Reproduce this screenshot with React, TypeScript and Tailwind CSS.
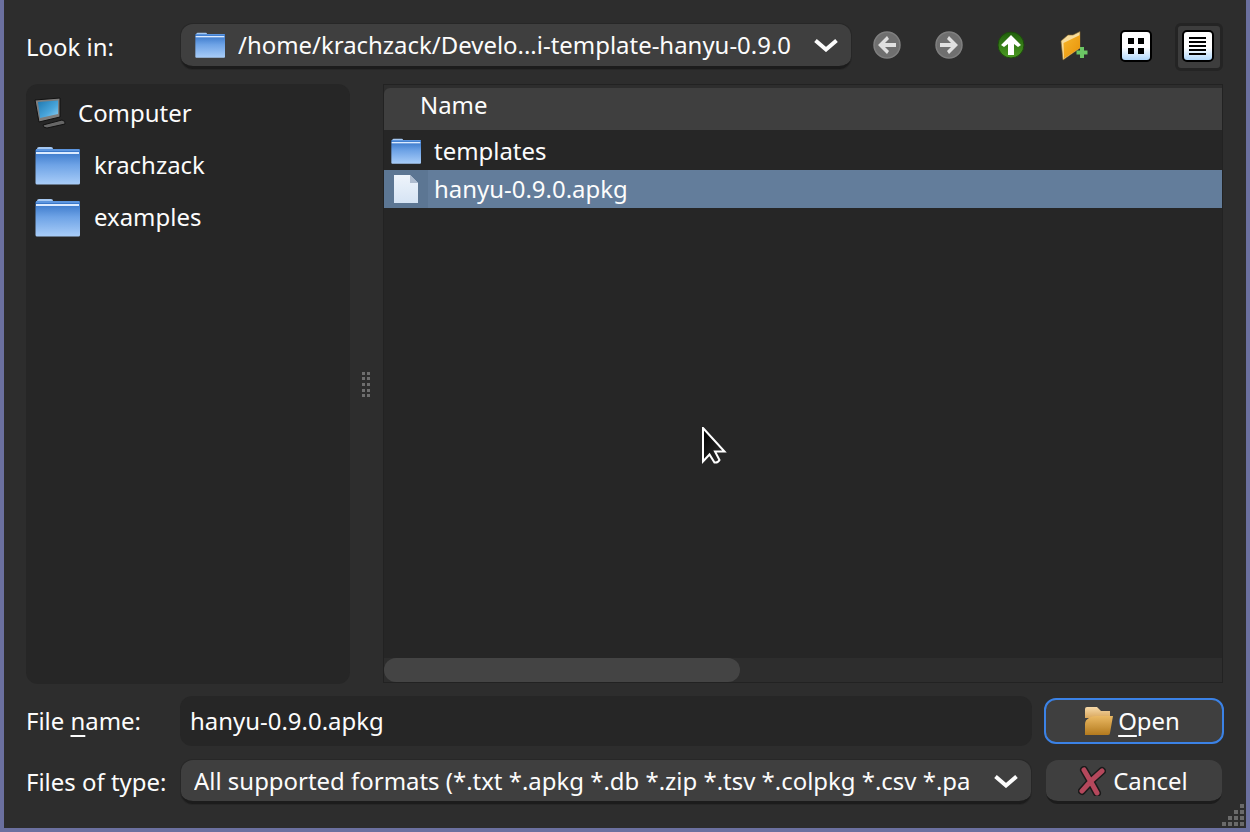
import React from 'react'

const FolderIcon = ({ id, className }: { id: string; className: string }) => (
  <svg viewBox="0 0 45 39" className={className}>
    <defs>
      <linearGradient id={id} x1="0" y1="0" x2="0" y2="1">
        <stop offset="0" stopColor="#2f6fc4" />
        <stop offset="0.45" stopColor="#6ea3e6" />
        <stop offset="1" stopColor="#a9cdf8" />
      </linearGradient>
    </defs>
    <path d="M2 3 Q2 1 4 1 H16 Q18 1 18 3 H2 Z" fill="#a5c8f2" />
    <rect x="0.5" y="3" width="44.5" height="35.5" rx="1.5" fill={`url(#${id})`} />
    <rect x="1" y="3" width="43.5" height="2" fill="#5c95de" />
    <rect x="1" y="6" width="43" height="2" fill="#dcebff" />
  </svg>
)

const FileIcon = () => (
  <svg viewBox="0 0 26 30" className="h-[30px] w-[26px]">
    <defs>
      <linearGradient id="file-grad" x1="0" y1="0" x2="0" y2="1">
        <stop offset="0" stopColor="#eef4fb" />
        <stop offset="1" stopColor="#d6e4f4" />
      </linearGradient>
    </defs>
    <path d="M1 1 H17 L25 9 V29 H1 Z" fill="url(#file-grad)" />
    <path d="M17 1 L25 9 H17 Z" fill="#aebccf" />
  </svg>
)

const ComputerIcon = () => (
  <svg viewBox="0 0 32 32" className="h-8 w-8">
    <defs>
      <linearGradient id="screen-grad" x1="0" y1="0" x2="1" y2="1">
        <stop offset="0" stopColor="#1f78b0" />
        <stop offset="0.6" stopColor="#4aa6dc" />
        <stop offset="1" stopColor="#8ccdf0" />
      </linearGradient>
    </defs>
    <path d="M1 3 L26 1 V20 L5 25 Z" fill="#7d7d7d" stroke="#111" strokeWidth="1" />
    <path d="M4 5 L24 3.5 V17 L6 21 Z" fill="url(#screen-grad)" />
    <path d="M9 28 L28 23 Q32 24 31 27 L13 31 Q9 31 9 28 Z" fill="#666" stroke="#111" strokeWidth="1" />
  </svg>
)

const Chevron = () => (
  <svg viewBox="0 0 24 14" className="h-[14px] w-6 shrink-0">
    <polyline points="1.5,2.5 12,11.5 22.5,2.5" fill="none" stroke="#fcfcfc" strokeWidth="4" />
  </svg>
)

const NavIcon = ({ dir }: { dir: 'left' | 'right' }) => (
  <svg viewBox="0 0 28 28" className="h-7 w-7">
    <circle cx="14" cy="14" r="13" fill="#6f6f6f" stroke="#7f7f7f" strokeWidth="1.5" />
    <path
      d={dir === 'left' ? 'M14 5 L5 14 L14 23 L16 20 L12 16 H23 V12 H12 L16 8 Z' : 'M14 5 L23 14 L14 23 L12 20 L16 16 H5 V12 H16 L12 8 Z'}
      fill="#e0e0e0"
    />
  </svg>
)

const UpIcon = () => (
  <svg viewBox="0 0 28 28" className="h-7 w-7">
    <defs>
      <linearGradient id="up-grad" x1="0" y1="0" x2="0" y2="1">
        <stop offset="0" stopColor="#1f5f0c" />
        <stop offset="1" stopColor="#4c9a22" />
      </linearGradient>
    </defs>
    <circle cx="14" cy="14" r="13" fill="url(#up-grad)" stroke="#1d4a0d" strokeWidth="1" />
    <path d="M14 4 L24 14 L21 16 L17 13 V24 H11 V13 L7 16 L4 14 Z" fill="#fff" />
  </svg>
)

const NewFolderIcon = () => (
  <svg viewBox="0 0 30 32" className="ml-1 h-8 w-[30px]">
    <defs>
      <linearGradient id="new-grad" x1="0" y1="0" x2="1" y2="1">
        <stop offset="0" stopColor="#f6b52a" />
        <stop offset="1" stopColor="#e8920a" />
      </linearGradient>
    </defs>
    <path d="M1 12 L8 6 L13 6 L20 2.5 V19 L3 31 Z" fill="#f7dc9c" stroke="#8a6a2a" strokeWidth="0.6" />
    <path d="M3.5 14 L20 6 V19 L4 29.5 Z" fill="url(#new-grad)" />
    <rect x="20" y="18" width="4" height="11" fill="#6cc765" />
    <rect x="16.5" y="21.5" width="11" height="4" fill="#6cc765" />
  </svg>
)

const IconViewIcon = () => (
  <svg viewBox="0 0 32 32" className="h-8 w-8">
    <defs>
      <linearGradient id="view-a" x1="0" y1="0" x2="0" y2="1">
        <stop offset="0.55" stopColor="#ffffff" />
        <stop offset="1" stopColor="#a9d4fb" />
      </linearGradient>
    </defs>
    <rect x="1" y="1" width="30" height="30" rx="4" fill="url(#view-a)" stroke="#000" strokeWidth="2" />
    <rect x="8" y="8" width="6" height="6" fill="#000" />
    <rect x="18" y="8" width="6" height="6" fill="#000" />
    <rect x="8" y="18" width="6" height="6" fill="#000" />
    <rect x="18" y="18" width="6" height="6" fill="#000" />
  </svg>
)

const ListViewIcon = () => (
  <svg viewBox="0 0 32 32" className="h-8 w-8 shrink-0">
    <defs>
      <linearGradient id="view-b" x1="0" y1="0" x2="0" y2="1">
        <stop offset="0.55" stopColor="#ffffff" />
        <stop offset="1" stopColor="#a9d4fb" />
      </linearGradient>
    </defs>
    <rect x="1" y="1" width="30" height="30" rx="4" fill="url(#view-b)" stroke="#000" strokeWidth="2" />
    <rect x="7" y="7" width="17" height="2" fill="#000" />
    <rect x="7" y="11" width="17" height="2" fill="#000" />
    <rect x="7" y="15" width="17" height="2" fill="#000" />
    <rect x="7" y="19" width="17" height="2" fill="#000" />
    <rect x="7" y="23" width="17" height="2" fill="#000" />
  </svg>
)

const OpenIcon = () => (
  <svg viewBox="0 0 30 30" className="h-[30px] w-[30px]">
    <defs>
      <linearGradient id="open-back" x1="0" y1="0" x2="0" y2="1">
        <stop offset="0" stopColor="#f6d9a8" />
        <stop offset="1" stopColor="#d9a75c" />
      </linearGradient>
      <linearGradient id="open-front" x1="0" y1="0" x2="0" y2="1">
        <stop offset="0" stopColor="#eab964" />
        <stop offset="1" stopColor="#b37a1e" />
      </linearGradient>
    </defs>
    <path d="M1 3 Q1 1 3 1 H13 L17 5 H26 V12 H1 Z" fill="url(#open-back)" />
    <path d="M1 29 V18 Q1 14 5 12 Q8 10 12 10 H29 L26 27 Q26 29 24 29 Z" fill="url(#open-front)" />
  </svg>
)

const CancelIcon = () => (
  <svg viewBox="0 0 28 30" className="h-[30px] w-7">
    <g fill="none" strokeLinecap="round">
      <path d="M6 4 Q12 14 19 27 M24 5 Q13 14 4 25" stroke="#1a1a1a" strokeWidth="8" />
      <path d="M6 4 Q12 14 19 27 M24 5 Q13 14 4 25" stroke="#b5485c" strokeWidth="5" />
    </g>
  </svg>
)

const SplitterGrip = () => (
  <svg viewBox="0 0 8 25" className="h-[25px] w-2">
    {[0, 5, 11, 17, 22].map(y => (
      <g key={y} fill="#6e6e6e">
        <rect x="0" y={y} width="3" height="3" />
        <rect x="5" y={y} width="3" height="3" />
      </g>
    ))}
  </svg>
)

const App = () => {
  return (
    <div
      className="relative flex h-[832px] w-[1250px] flex-col overflow-hidden border-x-4 border-b-4 border-[#6b709f] bg-[#2d2d2d] pt-6 pr-6 pl-[22px] text-[23.95px] leading-8 text-[#fcfcfc]"
      style={{ fontFamily: '"Noto Sans", sans-serif' }}
    >
      {/* Look in */}
      <div className="flex h-[45px] items-center">
        <div className="w-[155px] shrink-0">Look in:</div>
        <div className="flex h-[45px] w-[670px] shrink-0 items-center rounded-xl border-b-[3px] border-[#1c1c1c] bg-[#3f3f3f] pr-[13px] pl-[14px] ring-1 ring-[#272727]">
          <FolderIcon id="combo-folder" className="h-[26px] w-[30px] shrink-0" />
          <span className="ml-[13px] flex-1 overflow-hidden whitespace-nowrap">/home/krachzack/Develo...i-template-hanyu-0.9.0</span>
          <Chevron />
        </div>
        <div className="ml-3 flex shrink-0 items-center">
          <div className="flex h-12 w-12 items-center justify-center pb-[3px]"><NavIcon dir="left" /></div>
          <div className="ml-[14px] flex h-12 w-12 items-center justify-center pb-[3px]"><NavIcon dir="right" /></div>
          <div className="ml-[14px] flex h-12 w-12 items-center justify-center pb-[3px]"><UpIcon /></div>
          <div className="ml-[14px] flex h-12 w-12 items-center justify-center pb-[3px]"><NewFolderIcon /></div>
          <div className="ml-[15px] flex h-12 w-12 items-center justify-center pb-px"><IconViewIcon /></div>
          <div className="mt-px ml-[15px] flex h-12 w-12 items-center justify-center rounded-md border-[3px] border-[#242424] bg-[#3d3d3d] pr-[2px] pb-[2px]"><ListViewIcon /></div>
        </div>
      </div>

      {/* Sidebar and file list */}
      <div className="mt-[15px] flex h-[600px]">
        <div className="flex w-[324px] shrink-0 flex-col rounded-xl bg-[#262626] pt-[7px] pl-[8px]">
          <div className="flex h-12 items-center pb-1">
            <ComputerIcon />
            <span className="ml-3">Computer</span>
          </div>
          <div className="flex h-[52px] items-center pl-px">
            <FolderIcon id="side-folder-a" className="h-[39px] w-[45px]" />
            <span className="ml-[14px]">krachzack</span>
          </div>
          <div className="flex h-[52px] items-center pl-px">
            <FolderIcon id="side-folder-b" className="h-[39px] w-[45px]" />
            <span className="ml-[14px]">examples</span>
          </div>
        </div>

        <div className="flex w-[33px] shrink-0 items-center justify-center pr-[1px]">
          <SplitterGrip />
        </div>

        <div className="-mr-px flex h-[599px] flex-1 flex-col border border-[#222222] pt-[3px]">
          <div className="flex h-[42px] shrink-0 items-center rounded-tl-md bg-[#3f3f3f] pb-[8px] pl-9">Name</div>
          <div className="flex min-h-0 flex-1 flex-col bg-[#262626] pt-[2px]">
            <div className="flex h-[38px] items-center pl-[7px]">
              <FolderIcon id="row-folder" className="h-[26px] w-[30px]" />
              <span className="ml-[13px]">templates</span>
            </div>
            <div className="flex h-[38px] bg-[#637d9b]">
              <div className="flex w-[44px] items-center justify-center bg-[#5c7693]">
                <FileIcon />
              </div>
              <span className="flex items-center pl-[6px]">hanyu-0.9.0.apkg</span>
            </div>
            <div className="flex-1" />
            <div className="h-6 shrink-0 bg-[#2d2d2d]">
              <div className="h-6 w-[356px] rounded-xl bg-[#444444]" />
            </div>
          </div>
        </div>
      </div>

      {/* File name */}
      <div className="mt-3 flex h-[50px] items-center">
        <div className="w-[154px] shrink-0">File <span className="underline decoration-2 underline-offset-[5px]">n</span>ame:</div>
        <div className="flex h-[50px] w-[852px] shrink-0 items-center rounded-xl bg-[#262626] pl-[10px]">hanyu-0.9.0.apkg</div>
        <div className="ml-3 flex h-[46px] w-[180px] shrink-0 items-center justify-center rounded-xl border-2 border-[#3b82e6] bg-[#3f3f3f] pr-1">
          <OpenIcon />
          <span className="ml-1"><span className="underline decoration-2 underline-offset-[5px]">O</span>pen</span>
        </div>
      </div>

      {/* Files of type */}
      <div className="mt-[14px] flex h-[44px] items-center">
        <div className="w-[155px] shrink-0">Files of type:</div>
        <div className="flex h-[44px] w-[850px] shrink-0 items-center rounded-xl border-b-[3px] border-[#1c1c1c] bg-[#3f3f3f] pr-[13px] pl-[13px] ring-1 ring-[#272727]">
          <span className="flex-1 overflow-hidden whitespace-nowrap">All supported formats (*.txt *.apkg *.db *.zip *.tsv *.colpkg *.csv *.pa</span>
          <Chevron />
        </div>
        <div className="ml-[15px] flex h-[44px] w-[176px] shrink-0 items-center justify-center rounded-xl border-b-[3px] border-[#1c1c1c] bg-[#3f3f3f] pr-[2px]">
          <CancelIcon />
          <span className="ml-[7px]">Cancel</span>
        </div>
      </div>

      {/* Pointer sits on top of the file list */}
      <svg viewBox="0 0 26 38" className="absolute top-[427px] left-[697px] h-[38px] w-[26px]">
        <defs>
          <linearGradient id="cursor-grad" x1="0" y1="0" x2="1" y2="1">
            <stop offset="0" stopColor="#000" />
            <stop offset="1" stopColor="#333" />
          </linearGradient>
        </defs>
        <path
          d="M2 1 L23.5 24.5 L14 24.5 L18.5 33 Q17 36 13.5 35.5 L8.5 27.5 L2 34.5 Z"
          fill="url(#cursor-grad)"
          stroke="#fff"
          strokeWidth="2"
        />
      </svg>

      {/* Window resize grip */}
      <svg viewBox="0 0 22 22" className="absolute right-[2px] bottom-[2px] h-[22px] w-[22px]">
        {[
          [18, 0],
          [12, 6], [18, 6],
          [6, 12], [12, 12], [18, 12],
          [0, 18], [6, 18], [12, 18], [18, 18],
        ].map(([x, y]) => (
          <rect key={`${x}-${y}`} x={x} y={y} width="4" height="4" fill="#6a6a6a" />
        ))}
      </svg>
    </div>
  )
}

export default App
